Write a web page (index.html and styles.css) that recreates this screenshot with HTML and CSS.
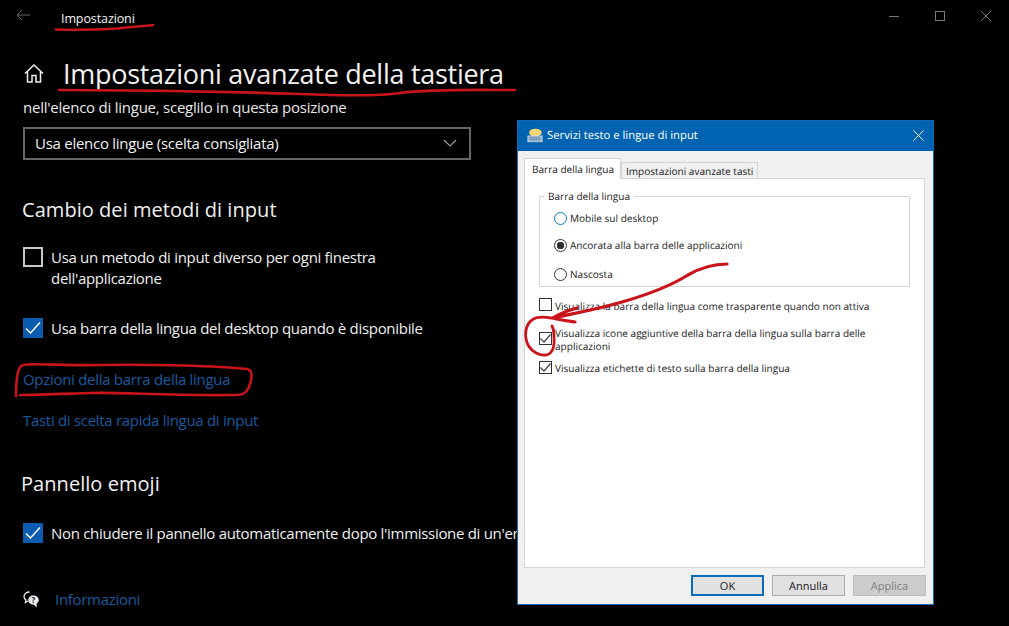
FILE: index.html
```html
<!DOCTYPE html>
<html lang="it">
<head>
<meta charset="utf-8">
<title>Impostazioni</title>
<link rel="stylesheet" href="styles.css">
</head>
<body>
<div class="settings">
  <header class="topbar">
    <svg class="back" width="14" height="12" viewBox="0 0 14 12"><path d="M14 6H1M6 1 1 6l5 5" fill="none" stroke="#666" stroke-width="1"/></svg>
    <span class="app-title">Impostazioni</span>
    <div class="winctl">
      <svg width="10" height="10" viewBox="0 0 10 10"><path d="M0 5.5h10" stroke="#777" stroke-width="1"/></svg>
      <svg width="10" height="10" viewBox="0 0 10 10"><rect x=".5" y=".5" width="9" height="9" fill="none" stroke="#777"/></svg>
      <svg width="10" height="10" viewBox="0 0 10 10"><path d="M0 0l10 10M10 0 0 10" stroke="#777" stroke-width="1"/></svg>
    </div>
  </header>
  <div class="heading-row">
    <svg class="home" width="20" height="19" viewBox="0 0 20 19"><path d="M1 9.5 10 1l9 8.500M3.500 7.500V18h4.500v-6.500h4V18h4.500V7.500" fill="none" stroke="#eee" stroke-width="1.500"/></svg>
    <h1>Impostazioni avanzate della tastiera</h1>
  </div>
  <p class="lead">nell'elenco di lingue, sceglilo in questa posizione</p>
  <div class="select">
    <span>Usa elenco lingue (scelta consigliata)</span>
    <svg width="14" height="8" viewBox="0 0 14 8"><path d="M1 1l6 6 6-6" fill="none" stroke="#999" stroke-width="1.200"/></svg>
  </div>
  <h2 class="sec-first">Cambio dei metodi di input</h2>
  <div class="check check-a"><span class="box"></span><span class="check-text">Usa un metodo di input diverso per ogni finestra<br>dell'applicazione</span></div>
  <div class="check check-b"><span class="box on"><svg width="16" height="14" viewBox="0 0 16 14"><path d="M1 7.500 5.500 12 15 1.500" fill="none" stroke="#fff" stroke-width="1.500"/></svg></span><span class="check-text">Usa barra della lingua del desktop quando è disponibile</span></div>
  <a class="link link-a">Opzioni della barra della lingua</a>
  <a class="link link-b">Tasti di scelta rapida lingua di input</a>
  <h2 class="sec-second">Pannello emoji</h2>
  <div class="check check-c"><span class="box on"><svg width="16" height="14" viewBox="0 0 16 14"><path d="M1 7.500 5.500 12 15 1.500" fill="none" stroke="#fff" stroke-width="1.500"/></svg></span><span class="check-text">Non chiudere il pannello automaticamente dopo l'immissione di un'emoji</span></div>
  <div class="info">
    <svg width="17" height="17" viewBox="0 0 17 17"><path d="M6.500 1C3.500 1 1 3 1 5.500 1 7 1.800 8.200 3 9l-.5 2.500L5 10" fill="none" stroke="#eee" stroke-width="1.300"/><path d="M10.500 4.500c-3 0-5.300 2-5.300 4.500s2.300 4.500 5.300 4.500l3.500 3-.5-3.800c1.300-.8 2.300-2.200 2.300-3.700 0-2.500-2.500-4.500-5.300-4.500z" fill="#eee"/><text x="10.500" y="12" text-anchor="middle" class="qmark">?</text></svg>
    <a class="link">Informazioni</a>
  </div>
</div>

<section class="dialog">
  <div class="dlg-title">
    <svg width="16" height="15" viewBox="0 0 19 17"><ellipse cx="10" cy="5" rx="7.500" ry="4.500" fill="#f2d774"/><path d="M5 8l-1 3 4-2z" fill="#f2d774"/><rect x="1" y="9" width="17" height="7" fill="#9cb6d2" stroke="#d8e4f0" stroke-width=".8"/><path d="M3 11h13M3 13h13M5 9.500v6M8 9.500v6M11 9.500v6M14 9.500v6" stroke="#5f7fa5" stroke-width=".6"/></svg>
    <span class="dlg-name">Servizi testo e lingue di input</span>
    <svg class="dlg-close" width="11" height="11" viewBox="0 0 11 11"><path d="M.5.500l10 10M10.500.500l-10 10" stroke="#fff" stroke-width="1"/></svg>
  </div>
  <div class="dlg-body">
    <div class="tabs">
      <span class="tab active">Barra della lingua</span>
      <span class="tab tab-second">Impostazioni avanzate tasti</span>
    </div>
    <div class="panel">
      <fieldset class="group">
        <legend>Barra della lingua</legend>
        <label class="radio radio-1"><span class="dot focus"></span>Mobile sul desktop</label>
        <label class="radio radio-2"><span class="dot sel"></span>Ancorata alla barra delle applicazioni</label>
        <label class="radio radio-3"><span class="dot"></span>Nascosta</label>
      </fieldset>
      <div class="opt opt-1"><span class="mini"></span><span class="opt-text">Visualizza la barra della lingua come trasparente quando non attiva</span></div>
      <div class="opt opt-2"><span class="mini"><svg width="11" height="9" viewBox="0 0 11 9"><path d="M.5 4.500 4 8l6.500-7.500" fill="none" stroke="#444" stroke-width="1.200"/></svg></span><span class="opt-text">Visualizza icone aggiuntive della barra della lingua sulla barra delle applicazioni</span></div>
      <div class="opt opt-3"><span class="mini"><svg width="11" height="9" viewBox="0 0 11 9"><path d="M.5 4.500 4 8l6.500-7.500" fill="none" stroke="#444" stroke-width="1.200"/></svg></span><span class="opt-text">Visualizza etichette di testo sulla barra della lingua</span></div>
    </div>
    <div class="buttons">
      <span class="btn default">OK</span>
      <span class="btn">Annulla</span>
      <span class="btn disabled">Applica</span>
    </div>
  </div>
</section>

<svg class="ink" width="1009" height="626" viewBox="0 0 1009 626">
  <g fill="none" stroke="#c8141a" stroke-width="2.600" stroke-linecap="round" stroke-linejoin="round">
    <path d="M56 29.500C80 30 100 29.500 118 28.500 130 26.500 145 26.500 153 25"/>
    <path d="M59 90C150 90 240 92 300 94 350 96 380 96 400 93 430 89 470 90 515 90"/>
    <path d="M16 396C16 385 17 370 21 366 26 362 60 366 100 365 150 364 220 366 247 369 253 370 252 378 250 384 248 391 245 395 235 395 170 396 120 392 90 393 60 394 35 395 20 395"/>
    <path d="M727 264C712 264 700 268 688 275 672 285 650 294 622 302 595 310 570 314 553 318M553 318C560 313 570 310 577 308M553 318C560 320 568 321 575 322" stroke-width="3.200"/>
    <path d="M551 318C545 317 537 316 532 320 525 325 524 336 528 345 532 352 540 356 546 355 553 354 555 345 554 337 554 331 553 328 552 326" stroke-width="2.800"/>
  </g>
</svg>
</body>
</html>
```
FILE: styles.css
```css
* { box-sizing: border-box; }
html, body { margin: 0; height: 100%; }
body {
  width: 1009px;
  height: 626px;
  background: #000;
  overflow: hidden;
  position: relative;
  font-family: "Open Sans", "Noto Sans", sans-serif;
  color: #f0f0f0;
}
.settings { display: flex; flex-direction: column; height: 626px; padding-left: 23px; }
.topbar { display: flex; align-items: center; height: 36px; }
.back { margin-left: -7px; margin-top: -6px; }
.app-title { margin-left: 31px; font-size: 12.5px; letter-spacing: -.1px; color: #f2f2f2; }
.winctl { margin-left: auto; width: 102px; display: flex; justify-content: space-between; margin-right: 18px; margin-top: -5px; }
.heading-row { display: flex; align-items: center; gap: 20px; height: 36px; margin-top: 19px; }
.home { margin-left: 1px; }
h1 { margin: 0; font-size: 27px; font-weight: 400; white-space: nowrap; letter-spacing: -.28px; color: #f2f2f2; margin-left: -1px; }
.lead { margin: 6px 0 0; font-size: 15px; line-height: 20px; letter-spacing: -.24px; color: #e8e8e8; }
.select { width: 448px; height: 33px; margin-top: 10px; border: 2px solid #666; display: flex; align-items: center; justify-content: space-between; padding: 0 12px 2px 10px; font-size: 15px; letter-spacing: -.27px; }
h2 { margin: 0; font-size: 20px; font-weight: 400; line-height: 28px; letter-spacing: .05px; margin-left: -1px; }
.sec-first { margin-top: 36px; }
.check { display: flex; gap: 8px; font-size: 15px; line-height: 21px; letter-spacing: -.3px; white-space: nowrap; }
.check-a { margin-top: 23px; }
.check-b { margin-top: 29px; }
.check-c { margin-top: 25px; }
.box { width: 20px; height: 20px; flex: none; border: 2px solid #c8c8c8; display: flex; align-items: center; justify-content: center; }
.box.on { background: #0a5cb0; border: 0; }
.link { color: #1b5a9f; font-size: 15px; line-height: 20px; letter-spacing: -.3px; }
.link-a { margin-top: 30px; }
.link-b { margin-top: 21px; }
.sec-second { margin-top: 40px; margin-left: -2px; }
.info { display: flex; align-items: center; gap: 15px; margin-top: 45px; }
.qmark { font-size: 8px; font-weight: 700; fill: #111; }

.dialog { position: absolute; left: 517px; top: 120px; width: 417px; height: 485px; border: 1px solid #1668b4; background: #f0f0f0; display: flex; flex-direction: column; font-size: 10.05px; text-rendering: geometricPrecision; color: #1a1a1a; }
.dlg-title { height: 30px; flex: none; background: #0063b1; color: #fff; display: flex; align-items: center; padding: 0 10px 1px 9px; gap: 10px; font-size: 11.3px; }
.dlg-name { flex: 1; margin-left: -6px; }
.dlg-close { margin-right: -1px; }
.dlg-body { flex: 1; display: flex; flex-direction: column; padding: 7px 8px 8px 6px; }
.tabs { display: flex; align-items: flex-end; height: 21px; flex: none; position: relative; z-index: 1; }
.tab { height: 17px; padding: 0 4px; line-height: 17px; background: #f0f0f0; border: 1px solid #d4d4d4; border-bottom: 1px solid #d4d4d4; white-space: nowrap; }
.tab.active { height: 21px; width: 97px; background: #fff; border-bottom: 0; padding: 0 7px; line-height: 21px; }
.panel { flex: 1; background: #fff; border: 1px solid #d4d4d4; margin-top: -1px; padding: 10px 14px 0; }
.group { margin: 0; padding: 0 0 0 14px; height: 98px; border: 1px solid #d5d5d5; display: flex; flex-direction: column; }
.group legend { padding: 0 4px; margin-left: -10px; line-height: 14px; }
.radio { display: flex; align-items: center; gap: 3px; height: 14px; white-space: nowrap; }
.radio-1 { margin-top: 8px; }
.radio-2 { margin-top: 13px; }
.radio-3 { margin-top: 15px; }
.dot { width: 13px; height: 13px; border: 1px solid #333; border-radius: 50%; background: #fff; flex: none; display: flex; }
.dot.focus { border-color: #0a78d0; }
.dot.sel { background: radial-gradient(circle, #333 0 3.5px, #fff 4px); }
.opt { display: flex; gap: 3px; line-height: 13px; }
.opt-1 { margin-top: 10px; height: 14px; align-items: center; }
.opt-1 .opt-text { padding-top: 4px; }
.opt-2 { margin-top: 15px; }
.opt-2 .opt-text { padding-top: 1px; }
.opt-2 .mini { margin-top: 6px; }
.opt-3 { margin-top: 7px; height: 14px; align-items: center; }
.opt-3 .opt-text { padding-top: 2px; }
.mini { width: 13px; height: 13px; flex: none; border: 1px solid #333; background: #fff; display: flex; align-items: center; justify-content: center; }
.buttons { display: flex; justify-content: flex-end; gap: 8px; margin: 7px -1px 0 0; flex: none; }
.btn { width: 73px; height: 21px; padding-top: 1px; background: #e1e1e1; border: 1px solid #adadad; display: flex; align-items: center; justify-content: center; font-size: 11px; }
.btn.default { border: 2px solid #0a6cbd; }
.btn.disabled { background: #cccccc; border-color: #bfbfbf; color: #838383; }
.ink { position: absolute; left: 0; top: 0; pointer-events: none; }
```
